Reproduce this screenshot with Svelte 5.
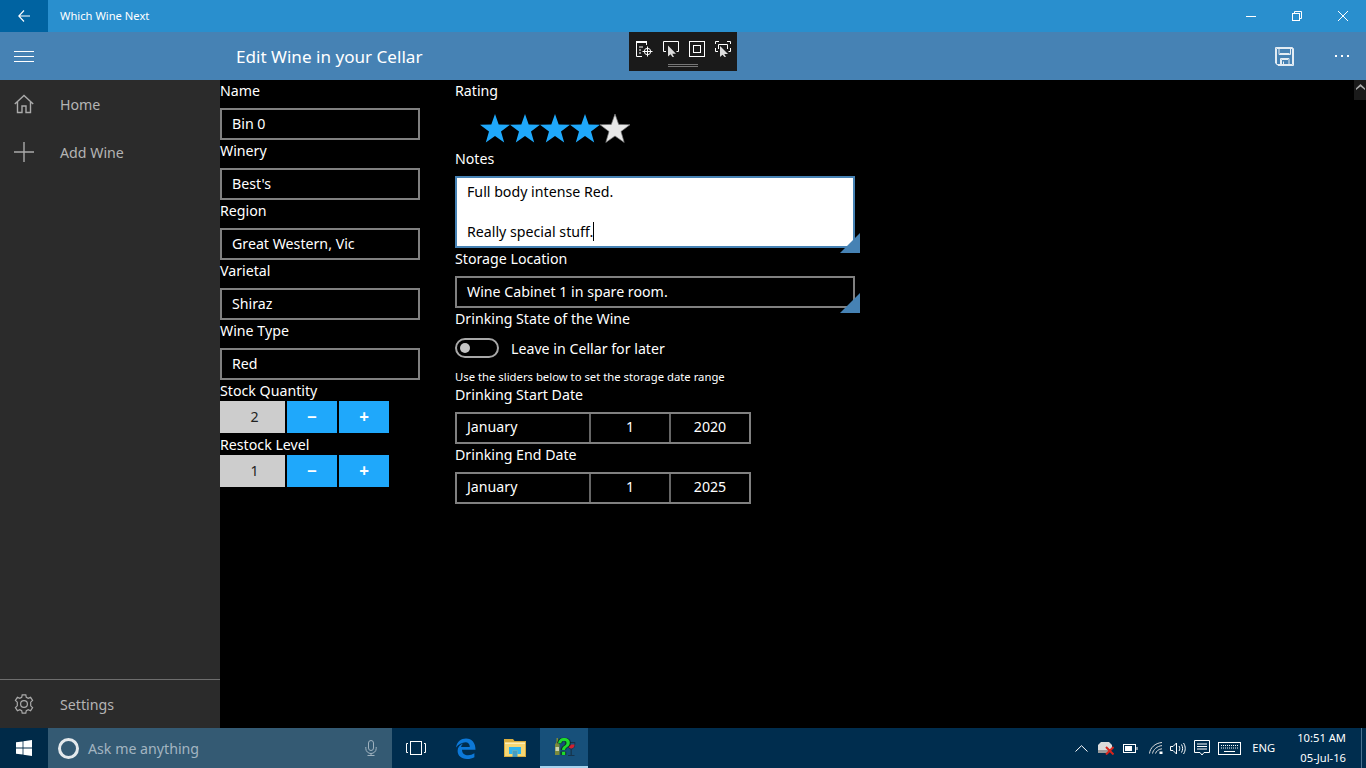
<script>
  const col1 = [
    ['Name', 'Bin 0'],
    ['Winery', "Best's"],
    ['Region', 'Great Western, Vic'],
    ['Varietal', 'Shiraz'],
    ['Wine Type', 'Red']
  ];
  const steppers = [
    ['Stock Quantity', '2'],
    ['Restock Level', '1']
  ];
  const dates = [
    ['Drinking Start Date', 'January', '1', '2020'],
    ['Drinking End Date', 'January', '1', '2025']
  ];
  const star = 'M15 0 L18.7 10.4 L30 10.7 L21 17.5 L24.2 28.4 L15 22 L5.8 28.4 L9 17.5 L0 10.7 L11.3 10.4 Z';
  const stars = [1, 1, 1, 1, 0];
</script>

<div class="root">
  <header class="titlebar">
    <div class="back">
      <svg width="12" height="12" viewBox="0 0 12 12" fill="none" stroke="#fff" stroke-width="1.1"><path d="M.8 6H12M6 .5L.8 6L6 11.5"/></svg>
    </div>
    <div class="apptitle">Which Wine Next</div>
    <div class="winctl">
      <span class="ctl"><svg width="10" height="10" viewBox="0 0 10 10"><path d="M0 5.5H10" stroke="#fff" stroke-width="1"/></svg></span>
      <span class="ctl"><svg width="10" height="10" viewBox="0 0 10 10" fill="none" stroke="#fff" stroke-width="1"><path d="M2.5 2.5V.5H9.5V7.5H7.5"/><rect x=".5" y="2.5" width="7" height="7"/></svg></span>
      <span class="ctl"><svg width="10" height="10" viewBox="0 0 10 10"><path d="M0 0L10 10M10 0L0 10" stroke="#fff" stroke-width="1"/></svg></span>
    </div>
  </header>

  <div class="appbar">
    <div class="burger">
      <svg width="20" height="12" viewBox="0 0 20 12" stroke="#fff" stroke-width="1"><path d="M0 .5H20M0 5.5H20M0 10.5H20"/></svg>
    </div>
    <h1>Edit Wine in your Cellar</h1>
    <div class="cmds">
      <span class="cmd"><svg width="19" height="19" viewBox="0 0 19 19" fill="none" stroke="#fff" stroke-width="1" opacity=".85"><path d="M.5 .5H17.5V17.5H2L.5 16Z"/><path d="M1.5 1.5H18.5V18.5H3L1.5 17Z"/><path d="M4 1V7.5H15.5V1"/><path d="M5 7.5V6.5H14.5"/><path d="M5.5 18V11.5H14V18M6.5 18V12.5H13M8.5 14.5V18"/></svg></span>
      <span class="cmd more"><i></i><i></i><i></i></span>
    </div>
  </div>

  <div class="main">
    <nav class="sidebar">
      <a class="navitem">
        <svg width="20" height="20" viewBox="0 0 20 20" fill="none" stroke="#aaa" stroke-width="1.4"><path d="M.8 10L10 1.5L19.2 10M3.5 8V18.5H8V12H12V18.5H16.5V8"/></svg>
        <span>Home</span>
      </a>
      <a class="navitem">
        <svg width="20" height="20" viewBox="0 0 20 20" stroke="#aaa" stroke-width="1.4"><path d="M0 10H20M10 0V20"/></svg>
        <span>Add Wine</span>
      </a>
      <div class="spacer"></div>
      <a class="navitem settings">
        <svg width="20" height="20" viewBox="0 0 20 20" fill="none" stroke="#aaa" stroke-width="1.2"><path d="M8.2 .8H11.8L12.3 3.4L14.2 4.4L16.6 3.3L18.6 6.3L16.7 8.2V11.8L18.6 13.7L16.6 16.7L14.2 15.6L12.3 16.6L11.8 19.2H8.2L7.7 16.6L5.8 15.6L3.4 16.7L1.4 13.7L3.3 11.8V8.2L1.4 6.3L3.4 3.3L5.8 4.4L7.7 3.4Z"/><circle cx="10" cy="10" r="3.4"/></svg>
        <span>Settings</span>
      </a>
    </nav>

    <section class="form">
      <div class="col one">
        {#each col1 as [label, value]}
          <label class="lbl">{label}</label>
          <div class="field">{value}</div>
        {/each}
        {#each steppers as [label, value]}
          <label class="lbl tight">{label}</label>
          <div class="stepper">
            <span class="qty">{value}</span>
            <span class="btn">−</span>
            <span class="btn">+</span>
          </div>
        {/each}
      </div>

      <div class="col two">
        <label class="lbl none">Rating</label>
        <div class="stars">
          {#each stars as on}
            <svg width="30" height="30" viewBox="0 0 30 30"><path d={star} fill={on ? '#1fa8fb' : '#e8e8e8'} stroke={on ? 'none' : '#777'} stroke-width=".7"/></svg>
          {/each}
        </div>
        <label class="lbl">Notes</label>
        <div class="field wide notes">
          <div>Full body intense Red.</div>
          <div class="empty">&nbsp;</div>
          <div>Really special stuff.<span class="caret"></span></div>
          <span class="grip"></span>
        </div>
        <label class="lbl">Storage Location</label>
        <div class="field wide">Wine Cabinet 1 in spare room.<span class="grip"></span></div>
        <label class="lbl none">Drinking State of the Wine</label>
        <div class="toggle-row">
          <span class="toggle"><i></i></span>
          <span class="toggle-text">Leave in Cellar for later</span>
        </div>
        <div class="hint">Use the sliders below to set the storage date range</div>
        {#each dates as [label, month, day, year]}
          <label class="lbl">{label}</label>
          <div class="date">
            <span class="month">{month}</span>
            <span class="day">{day}</span>
            <span class="year">{year}</span>
          </div>
        {/each}
      </div>
    </section>

    <div class="scrollcap">
      <svg width="9" height="6" viewBox="0 0 9 6" fill="#aaa"><path d="M4.5 0L9 4.2V6L4.5 2.5L0 6V4.2Z"/></svg>
    </div>
  </div>

  <div class="overlay">
    <div class="tools">
      <svg width="17" height="16" viewBox="0 0 17 16" fill="none" stroke="#fff" stroke-width="1"><path d="M.5 1V15.5H6M10.5 1V4"/><path d="M0 1H11" stroke-width="2"/><path d="M3 6H7M3 9H5M3 12H5"/><circle cx="11.5" cy="10.5" r="3.2"/><path d="M11.5 5.5V15.5M6.5 10.5H16.5"/></svg>
      <svg width="16" height="16" viewBox="0 0 16 16" fill="none" stroke="#fff" stroke-width="1"><path d="M3 10.5H.5V.5H15.5V10.5H13.5"/><path d="M5 4.5V15.5L7.5 13.3L9.5 16H11L9.3 12.7H13Z" fill="#ddd" stroke="none"/></svg>
      <svg width="16" height="16" viewBox="0 0 16 16" fill="none" stroke="#fff" stroke-width="1"><rect x=".5" y=".5" width="15" height="15"/><rect x="4.5" y="4.5" width="7" height="7"/></svg>
      <svg width="16" height="16" viewBox="0 0 16 16" fill="none" stroke="#fff" stroke-width="1"><path d="M.5 3V.5H4M12 .5H15.5V3M15.5 7V10.5H13.5M.5 7V10.5H3"/><path d="M3.5 8V3.5H12.5V8"/><path d="M5 5V16L7.5 13.8L9.5 16H11L9.3 13H13Z" fill="#ddd" stroke="none"/></svg>
    </div>
    <div class="handle"></div>
  </div>

  <footer class="taskbar">
    <div class="start">
      <svg width="16" height="16" viewBox="0 0 16 16" fill="#fff"><path d="M0 2.3L6.6 1.4V7.6H0ZM7.4 1.3L16 0V7.6H7.4ZM0 8.4H6.6V14.6L0 13.7ZM7.4 8.4H16V16L7.4 14.7Z"/></svg>
    </div>
    <div class="search">
      <span class="cortana"></span>
      <span class="ask">Ask me anything</span>
      <svg class="mic" width="12" height="16" viewBox="0 0 12 16" fill="none" stroke="#9fb2bf" stroke-width="1"><rect x="3.5" y=".5" width="5" height="10" rx="2.5"/><path d="M.8 7V8.5A5.2 5 0 0 0 11.2 8.5V7M6 13.5V15.5M2.5 15.5H9.5"/></svg>
    </div>
    <div class="tb"><svg width="20" height="14" viewBox="0 0 20 14" fill="none" stroke="#fff" stroke-width="1"><rect x="4.5" y=".5" width="11" height="13"/><path d="M2 2.5H.5V11.5H2M18 2.5H19.5V11.5H18"/></svg></div>
    <div class="tb edge"><svg width="21" height="21" viewBox="0 0 21 21"><path fill="#0c78d8" d="M1 9.5C2 3.5 6 .5 11 .5C17 .5 20.5 5 20.5 11.7H7C7 15.5 10 17.3 13 17.3C15.5 17.3 17.5 16.5 19.4 15.3V19.2C17.3 20.3 15 21 12 21C6 21 2.6 17.3 2.6 13C2.6 9.5 4.5 7 8 5.6C6.8 7 6.2 8.2 6.1 9H14.8C14.8 6 13 4.3 10.5 4.3C7 4.3 3.5 6.5 1 9.5Z"/></svg></div>
    <div class="tb folder"><svg width="22" height="18" viewBox="0 0 22 18"><path fill="#d9ad3f" d="M0 0H9L10.5 2H22V18H0Z"/><path fill="#f6d775" d="M1 3.5H21V17H1Z"/><path fill="#fdeeb5" d="M1 3.5H21V5H1Z"/><path fill="#2db4ef" d="M5 8H17V15H13.5V11.5H8.5V15H5Z"/><path fill="#1c8fd3" d="M8.5 11.5H13.5V18H8.5Z" opacity=".8"/></svg></div>
    <div class="tb active">
      <svg width="24" height="20" viewBox="0 0 24 20">
        <path d="M4.5 1H6V5L7.5 7.5V18H3V7.5L4.5 5Z" fill="#7c8a3c"/>
        <path d="M3.5 10H7V14H3.5Z" fill="#ccd4b0"/>
        <path d="M15.5 5.5H23L22.4 9.5C22 11 20.5 12 19.2 12C18 12 16.4 11 16 9.5Z" fill="none" stroke="#16344c" stroke-width="1"/>
        <path d="M16 7.5H22.6L22.2 9.5C21.7 10.6 20.4 11.5 19.2 11.5C18 11.5 16.8 10.6 16.3 9.5Z" fill="#d02030"/>
        <path d="M19.2 12V18M16 18.5H22.5" stroke="#16344c" stroke-width="1.2" fill="none"/>
      </svg>
      <span class="q">?</span>
    </div>

    <div class="tray">
      <svg class="up" width="13" height="7" viewBox="0 0 13 7" fill="none" stroke="#fff" stroke-width="1"><path d="M.5 6.5L6.5 .7L12.5 6.5"/></svg>
      <svg class="net" width="16" height="14" viewBox="0 0 16 14"><path d="M3 1H11L14 4V9H0V4Z" fill="#dcdcdc"/><path d="M0 9H11V12H0Z" fill="#9a9a9a"/><path d="M8 6L15.5 13.5M15.5 6L8 13.5" stroke="#d8241c" stroke-width="2"/></svg>
      <svg class="bat" width="15" height="9" viewBox="0 0 15 9" fill="none" stroke="#fff" stroke-width="1"><rect x=".5" y=".5" width="12" height="8"/><rect x="2" y="2" width="7" height="5" fill="#fff" stroke="none"/><path d="M14 3V6"/></svg>
      <svg class="wifi" width="14" height="12" viewBox="0 0 14 12" fill="none" stroke="#ddd" stroke-width="1"><path d="M.5 11.5C1 6 6 1 13 .5M3.5 11.5C4 8 8 4 13 3.6M6.5 11.5C7 9.5 9.5 7 13 6.8"/><rect x="10.5" y="9.5" width="3" height="2.5" fill="#fff" stroke="none"/></svg>
      <svg class="vol" width="16" height="13" viewBox="0 0 16 13" fill="none" stroke="#fff" stroke-width="1"><path d="M.5 4.5H3L6.5 1V12L3 8.5H.5Z"/><path d="M9 4C10 5.5 10 7.5 9 9M11.5 2.5C13 5 13 8 11.5 10.5M13.5 1C15.8 4.5 15.8 8.5 13.5 12"/></svg>
      <svg class="msg" width="16" height="17" viewBox="0 0 16 17" fill="none" stroke="#fff" stroke-width="1"><path d="M.5 .5H15.5V12.5H10L8 15L6 12.5H.5Z"/><path d="M3 4H13M3 6.5H13M3 9H13"/></svg>
      <svg class="kbd" width="23" height="13" viewBox="0 0 23 13" fill="none" stroke="#fff" stroke-width="1"><rect x=".5" y=".5" width="22" height="12"/><path d="M3 3.5H20M3 6H20" stroke-dasharray="1 1"/><path d="M6 9.5H17"/></svg>
      <span class="eng">ENG</span>
      <div class="clock"><span>10:51 AM</span><span>05-Jul-16</span></div>
      <span class="showdesk"></span>
    </div>
  </footer>
</div>

<style>
  :global(body) {
    margin: 0;
    background: #000;
  }
  .root {
    position: relative;
    display: flex;
    flex-direction: column;
    width: 1366px;
    height: 768px;
    overflow: hidden;
    background: #000;
    color: #fff;
    font-family: "Noto Sans", "Open Sans", sans-serif;
    font-size: 14.2px;
    line-height: 20px;
  }
  .titlebar {
    display: flex;
    align-items: center;
    height: 32px;
    flex: none;
    background: #298fce;
  }
  .back {
    width: 48px;
    height: 32px;
    display: flex;
    align-items: center;
    justify-content: center;
    background: #0063a1;
  }
  .apptitle {
    margin-left: 12px;
    font-size: 11.2px;
  }
  .winctl {
    margin-left: auto;
    display: flex;
  }
  .ctl {
    width: 46px;
    height: 32px;
    display: flex;
    align-items: center;
    justify-content: center;
  }
  .appbar {
    display: flex;
    align-items: center;
    height: 48px;
    flex: none;
    background: #4682b4;
  }
  .burger {
    width: 48px;
    height: 48px;
    padding-top: 2px;
    box-sizing: border-box;
    display: flex;
    align-items: center;
    justify-content: center;
  }
  h1 {
    margin: 2px 0 0 188px;
    font-size: 17.1px;
    font-weight: 400;
  }
  .cmds {
    margin-left: auto;
    display: flex;
  }
  .cmd {
    width: 68px;
    height: 48px;
    display: flex;
    align-items: center;
    justify-content: center;
  }
  .more {
    width: 48px;
    gap: 4px;
  }
  .more i {
    width: 2px;
    height: 2px;
    background: #fff;
  }
  .main {
    position: relative;
    flex: 1;
    display: flex;
    min-height: 0;
  }
  .sidebar {
    width: 220px;
    flex: none;
    background: #2b2b2b;
    display: flex;
    flex-direction: column;
    color: #b4b4b4;
  }
  .navitem {
    display: flex;
    align-items: center;
    height: 48px;
    padding-left: 14px;
    gap: 26px;
  }
  .navitem span {
    padding-top: 2px;
  }
  .spacer {
    flex: 1;
  }
  .settings {
    border-top: 1px solid #6e6e6e;
  }
  .form {
    display: flex;
    padding: 0;
  }
  .col {
    display: flex;
    flex-direction: column;
    align-items: flex-start;
  }
  .one {
    width: 235px;
  }
  .lbl {
    height: 20px;
    line-height: 22px;
    margin-bottom: 8px;
  }
  .lbl.tight {
    margin-bottom: 1px;
  }
  .lbl.none {
    margin-bottom: 0;
  }
  .field {
    position: relative;
    box-sizing: border-box;
    width: 200px;
    height: 32px;
    border: 2px solid #808080;
    padding: 4px 10px;
  }
  .wide {
    width: 400px;
  }
  .notes {
    height: 72px;
    background: #fff;
    color: #000;
    border-color: #4682b4;
  }
  .caret {
    display: inline-block;
    width: 1px;
    height: 19px;
    background: #000;
    vertical-align: -4px;
  }
  .grip {
    position: absolute;
    right: -7px;
    bottom: -7px;
    width: 0;
    height: 0;
    border-style: solid;
    border-width: 0 0 20px 20px;
    border-color: transparent transparent #4682b4 transparent;
  }
  .stepper {
    display: flex;
    gap: 2px;
    margin-bottom: 1px;
  }
  .stepper:last-child {
    margin-bottom: 0;
  }
  .qty, .btn {
    height: 32px;
    display: flex;
    align-items: center;
    justify-content: center;
  }
  .qty {
    box-sizing: border-box;
    width: 65px;
    padding-left: 4px;
    background: #cdcdcd;
    color: #222;
  }
  .btn {
    width: 50px;
    background: #1fa8fb;
    font-weight: 700;
    font-size: 17px;
  }
  .stars {
    display: flex;
    height: 48px;
    padding: 14px 0 0 25px;
    box-sizing: border-box;
  }
  .toggle-row {
    display: flex;
    align-items: center;
    height: 20px;
    margin-top: 10px;
    gap: 12px;
  }
  .toggle-text {
    padding-top: 2px;
  }
  .toggle {
    box-sizing: border-box;
    width: 44px;
    height: 20px;
    border: 2px solid #a8a8a8;
    border-radius: 10px;
    display: flex;
    align-items: center;
    padding-left: 3px;
  }
  .toggle i {
    width: 10px;
    height: 10px;
    border-radius: 50%;
    background: #c4c4c4;
  }
  .hint {
    margin-top: 11px;
    font-size: 11.3px;
    line-height: 15px;
  }
  .date {
    display: grid;
    grid-template-columns: 132px 80px 80px;
    box-sizing: border-box;
    width: 296px;
    height: 32px;
    border: 2px solid #808080;
  }
  .date span {
    display: flex;
    align-items: center;
    justify-content: center;
    padding-bottom: 2px;
  }
  .date .month {
    justify-content: flex-start;
    padding-left: 10px;
  }
  .date .day, .date .year {
    border-left: 2px solid #666;
  }
  .scrollcap {
    position: absolute;
    right: 0;
    top: 0;
    width: 12px;
    height: 20px;
    padding-top: 4px;
    box-sizing: border-box;
    background: #1a1a1a;
    display: flex;
    align-items: flex-start;
    justify-content: center;
  }
  .overlay {
    position: absolute;
    left: 629px;
    top: 32px;
    width: 108px;
    height: 39px;
    background: #1a1a1a;
    display: flex;
    flex-direction: column;
    align-items: center;
  }
  .tools {
    display: flex;
    align-items: center;
    gap: 10px;
    height: 16px;
    margin-top: 9px;
  }
  .handle {
    width: 30px;
    height: 1px;
    border-top: 1px solid #777;
    border-bottom: 1px solid #777;
    margin-top: 7px;
  }
  .taskbar {
    display: flex;
    align-items: stretch;
    height: 40px;
    flex: none;
    background: #002d4e;
  }
  .start {
    width: 48px;
    display: flex;
    align-items: center;
    justify-content: center;
    background: #002a48;
  }
  .search {
    width: 344px;
    display: flex;
    align-items: center;
    background: #345a73;
    position: relative;
  }
  .cortana {
    box-sizing: border-box;
    width: 21px;
    height: 21px;
    border: 3px solid #e4e9ec;
    border-radius: 50%;
    margin-left: 10px;
  }
  .ask {
    margin-left: 9px;
    padding-top: 2px;
    color: #a3b5c1;
  }
  .mic {
    margin-left: auto;
    margin-right: 15px;
  }
  .tb {
    width: 48px;
    display: flex;
    align-items: center;
    justify-content: center;
  }
  .edge {
    width: 50px;
  }
  .folder {
    width: 50px;
  }
  .active {
    position: relative;
    background: #17507a;
    box-sizing: border-box;
    border-bottom: 2px solid #a6d3ee;
  }
  .q {
    position: absolute;
    left: 17px;
    top: 6px;
    font-size: 23px;
    line-height: 26px;
    font-weight: 700;
    color: #1fdc2c;
    font-family: "Liberation Sans", sans-serif;
    text-shadow: 0 0 1px #0a2a20, 1px 0 0 #0a2a20, -1px 0 0 #0a2a20;
  }
  .tray {
    margin-left: auto;
    display: flex;
    align-items: center;
    font-size: 11.2px;
  }
  .up { margin-right: 10px; }
  .net { margin-right: 9px; }
  .bat { margin-right: 11px; }
  .wifi { margin-right: 7px; }
  .vol { margin-right: 8px; }
  .msg { margin-right: 8px; }
  .kbd { margin-right: 11px; }
  .eng {
    margin-right: 22px;
  }
  .clock {
    display: flex;
    flex-direction: column;
    align-items: flex-end;
    line-height: 20px;
    margin-right: 15px;
  }
  .showdesk {
    width: 1px;
    height: 40px;
    background: #4a7391;
    margin-right: 4px;
  }
</style>
